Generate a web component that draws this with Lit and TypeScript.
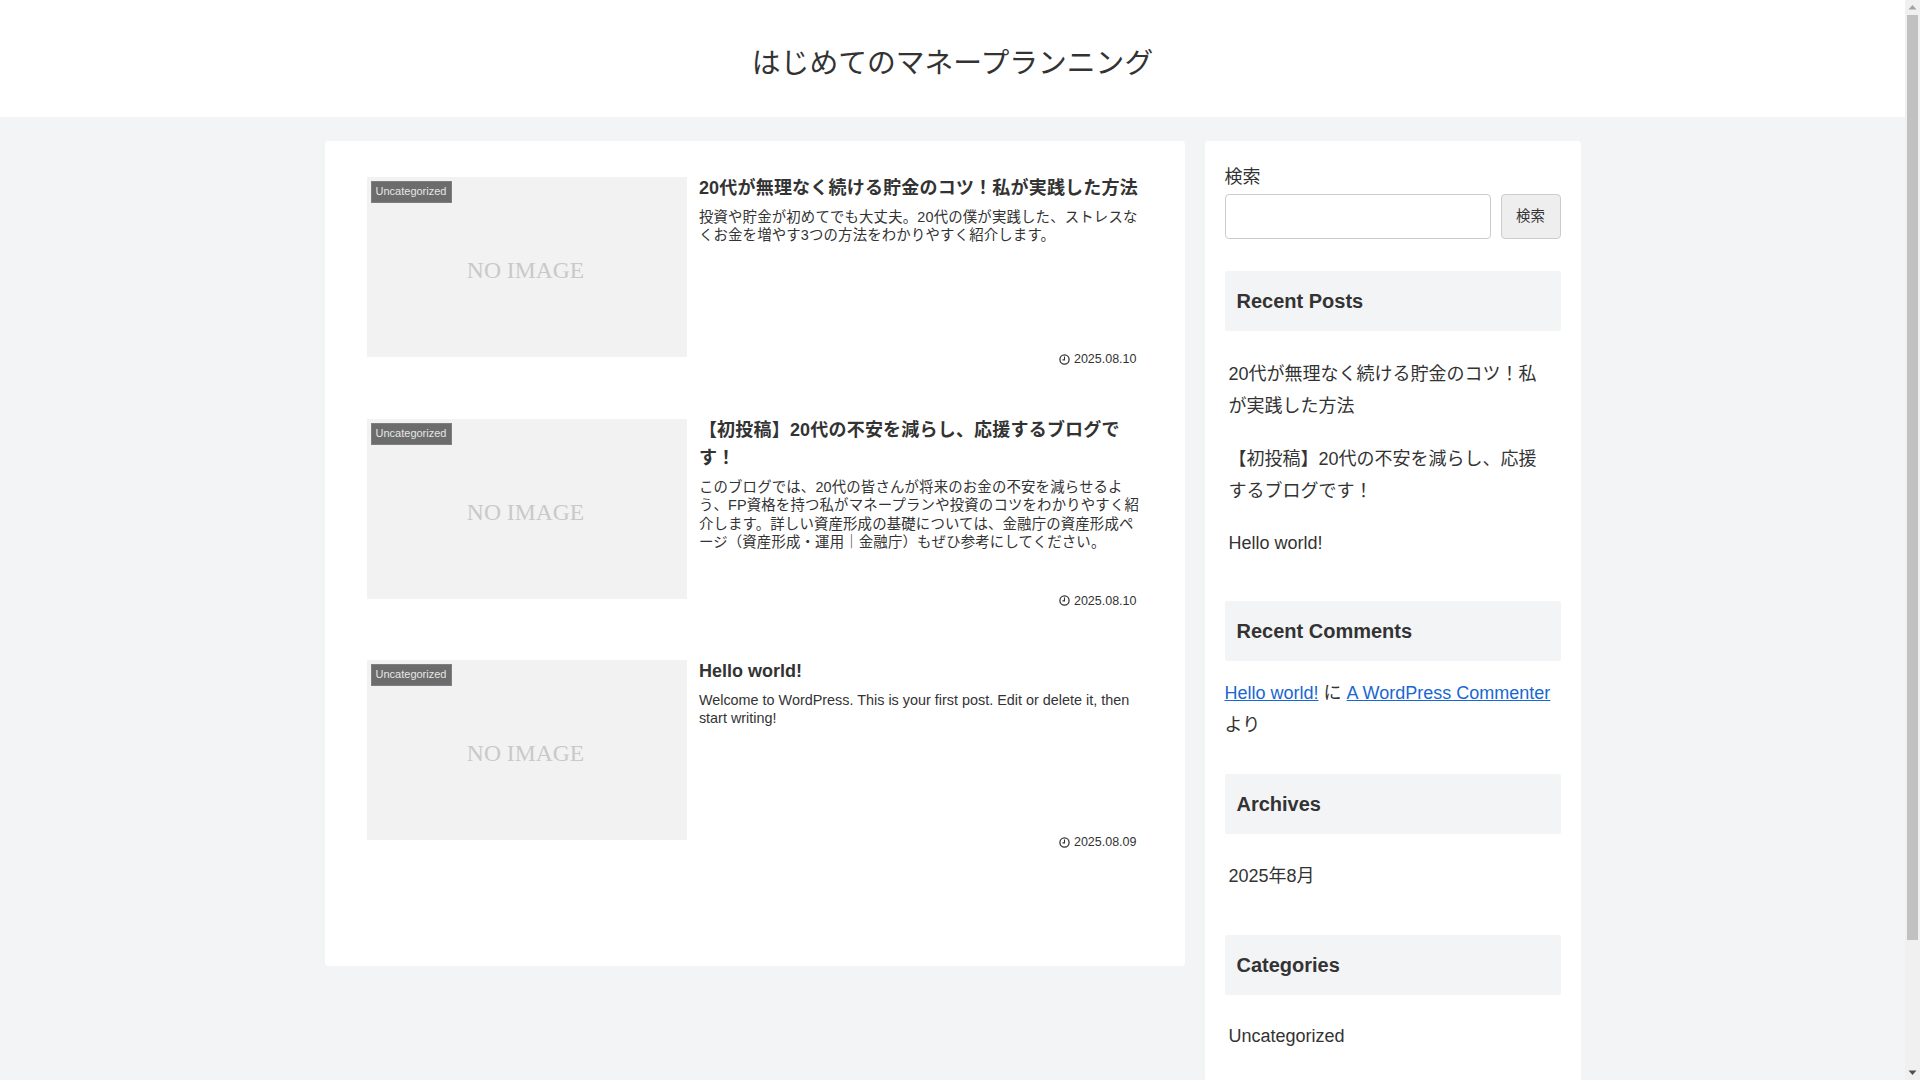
import { LitElement, html, css } from "lit";
import { customElement } from "lit/decorators.js";
import { classMap } from "lit/directives/class-map.js";

const clock = html`<svg class="clock" viewBox="0 0 12 12" aria-hidden="true">
  <circle cx="6" cy="6" r="5" fill="none" stroke="#333" stroke-width="1.4"></circle>
  <path d="M6 2.8v3.6h-2.2" fill="none" stroke="#333" stroke-width="1.2"></path>
</svg>`;

const posts = [
  {
    title: "20代が無理なく続ける貯金のコツ！私が実践した方法",
    text: "投資や貯金が初めてでも大丈夫。20代の僕が実践した、ストレスなくお金を増やす3つの方法をわかりやすく紹介します。",
    date: "2025.08.10",
    cjk: true,
  },
  {
    title: "【初投稿】20代の不安を減らし、応援するブログです！",
    text: "このブログでは、20代の皆さんが将来のお金の不安を減らせるよう、FP資格を持つ私がマネープランや投資のコツをわかりやすく紹介します。詳しい資産形成の基礎については、金融庁の資産形成ページ（資産形成・運用｜金融庁）もぜひ参考にしてください。",
    date: "2025.08.10",
    cjk: true,
  },
  {
    title: "Hello world!",
    text: "Welcome to WordPress. This is your first post. Edit or delete it, then start writing!",
    date: "2025.08.09",
    cjk: false,
  },
];

@customElement("app-root")
export class AppRoot extends LitElement {
  static styles = css`
    :host {
      display: flex;
      height: 1080px;
      overflow: hidden;
      background: #f3f4f6;
      color: #333;
      font-family: "Liberation Sans", "Noto Sans CJK JP", sans-serif;
      font-size: 18px;
      line-height: 1.8;
    }
    .page { flex: 1; min-width: 0; overflow: hidden; }
    .header {
      height: 117px;
      background: #fff;
      display: flex;
      justify-content: center;
      align-items: flex-start;
      padding-top: 37px;
      box-sizing: border-box;
      font-size: 28.8px;
      line-height: 52px;
    }
    .wrap {
      width: 1256px;
      margin: 24px auto 0;
      display: flex;
      align-items: flex-start;
      gap: 20px;
    }
    .main {
      width: 860px;
      height: 825px;
      box-sizing: border-box;
      background: #fff;
      border-radius: 4px;
      padding: 36px 42px 0;
      display: flex;
      flex-direction: column;
      gap: 51.5px;
    }
    .entry { display: flex; gap: 12.4px; align-items: flex-start; }
    .thumb {
      flex: none;
      width: 320px;
      height: 180px;
      background: #f2f2f2;
      display: flex;
      align-items: center;
      justify-content: center;
      position: relative;
    }
    .noimg {
      font-family: "Liberation Serif", serif;
      font-size: 23.6px;
      line-height: 1;
      color: #c9c9c9;
      transform: translate(-1px, 3.5px);
    }
    .cat {
      position: absolute;
      left: 4px;
      top: 4px;
      width: 81px;
      height: 22px;
      box-sizing: border-box;
      background: #6c6c6c;
      color: #e6e6e6;
      font-size: 11px;
      line-height: 19px;
      text-align: center;
      border: 1px solid #ffffff22;
    }
    .body {
      flex: 1;
      min-width: 0;
      height: 190px;
      display: flex;
      flex-direction: column;
    }
    .title {
      margin: -2.7px 0 0;
      font-size: 18px;
      font-weight: 700;
      line-height: 28.4px;
    }
    .text {
      margin: 5.3px 0 0;
      font-size: 14.4px;
      line-height: 18.4px;
    }
    .title.cjk { letter-spacing: 0.2px; }
    .text.cjk { letter-spacing: 0.17px; }
    .date {
      margin-top: auto;
      padding-right: 6px;
      display: flex;
      justify-content: flex-end;
      align-items: center;
      gap: 3.5px;
      font-size: 12.5px;
      line-height: 16px;
    }
    .clock { width: 11px; height: 11px; display: block; }
    .side {
      width: 376px;
      height: 1000px;
      box-sizing: border-box;
      background: #fff;
      border-radius: 4px 4px 0 0;
      padding: 20px;
    }
    .label { line-height: 32px; height: 33px; font-size: 18px; }
    .search { display: flex; gap: 10px; height: 45px; }
    .input {
      flex: 1;
      box-sizing: border-box;
      border: 1px solid #ccc;
      border-radius: 4px;
      background: #fff;
      padding: 0;
      font: inherit;
    }
    .btn {
      width: 60px;
      box-sizing: border-box;
      border: 1px solid #ccc;
      border-radius: 4px;
      background: #eee;
      color: #333;
      padding: 0 0 4px;
      font-family: inherit;
      font-size: 14.4px;
    }
    .head {
      margin: 0;
      height: 60px;
      box-sizing: border-box;
      background: #f3f4f6;
      border-radius: 2px;
      padding: 0 12px;
      font-size: 20px;
      font-weight: 700;
      line-height: 60px;
    }
    .list { list-style: none; margin: 0; padding: 16.5px 0 31px; }
    .list li { padding: 10.4px 10px 10.4px 4px; line-height: 32px; }
    .list.short { padding-top: 15.2px; padding-bottom: 32.5px; }
    .comment { margin: 16.2px 0 32.4px; line-height: 32.4px; }
    .comment a { color: #1967d2; }
    .search-gap { height: 32px; }
    .bar {
      flex: none;
      width: 15px;
      height: 1080px;
      background: #f0f0f0;
      display: flex;
      flex-direction: column;
      align-items: center;
    }
    .up, .down { width: 9px; height: 15px; display: block; flex: none; }
    .thumbbar { width: 11px; height: 925px; background: #c1c1c1; flex: none; }
    .spacer { flex: 1; }
  `;

  render() {
    return html`
      <div class="page">
        <header class="header"><div>はじめてのマネープランニング</div></header>
        <div class="wrap">
          <main class="main">
            ${posts.map(
              (p) => html`<article class="entry">
                <div class="thumb">
                  <span class="noimg">NO IMAGE</span>
                  <span class="cat">Uncategorized</span>
                </div>
                <div class="body">
                  <h2 class=${classMap({ title: true, cjk: p.cjk })}>${p.title}</h2>
                  <p class=${classMap({ text: true, cjk: p.cjk })}>${p.text}</p>
                  <div class="date">${clock}<span>${p.date}</span></div>
                </div>
              </article>`
            )}
          </main>
          <aside class="side">
            <div class="label">検索</div>
            <div class="search">
              <input class="input" type="text" />
              <button class="btn">検索</button>
            </div>
            <div class="search-gap"></div>
            <h3 class="head">Recent Posts</h3>
            <ul class="list">
              ${posts.map((p) => html`<li>${p.title}</li>`)}
            </ul>
            <h3 class="head">Recent Comments</h3>
            <p class="comment">
              <a href="#">Hello world!</a> に <a href="#">A WordPress Commenter</a> より
            </p>
            <h3 class="head">Archives</h3>
            <ul class="list short"><li>2025年8月</li></ul>
            <h3 class="head">Categories</h3>
            <ul class="list short"><li>Uncategorized</li></ul>
          </aside>
        </div>
      </div>
      <div class="bar">
        <svg class="up" viewBox="0 0 9 15"><path d="M4.5 5L8.5 9.5H.5z" fill="#a3a3a3"></path></svg>
        <div class="thumbbar"></div>
        <div class="spacer"></div>
        <svg class="down" viewBox="0 0 9 15"><path d="M4.5 10L8.5 5.5H.5z" fill="#505050"></path></svg>
      </div>
    `;
  }
}
